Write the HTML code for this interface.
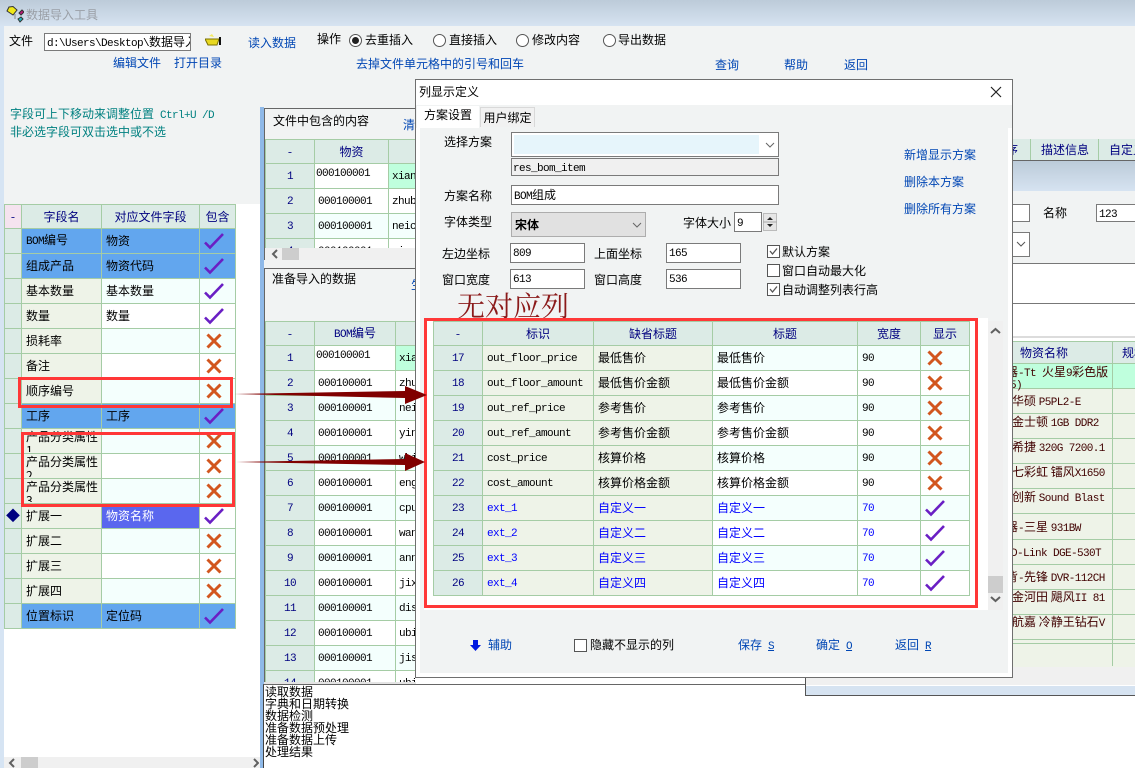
<!DOCTYPE html>
<html><head><meta charset="utf-8"><style>
html,body{margin:0;padding:0;width:1135px;height:768px;overflow:hidden;background:#fff}
body{position:relative;font:12px/14px "WenQuanYi Zen Hei","Noto Sans CJK SC",sans-serif;color:#000}
div,table,svg,span.t{position:absolute}
.t{position:absolute;white-space:nowrap}
.m{font-family:"Liberation Mono",monospace;font-size:11px;letter-spacing:-.6px}
.u{text-decoration:underline;margin-left:6px}
.l{color:#0046b4}
.inp{background:#fff;border:1px solid #7a7a7a;box-sizing:border-box;white-space:nowrap;overflow:hidden;padding-left:2px;line-height:16px}
table.g{border-collapse:collapse;table-layout:fixed;background:#fff}
table.g td{border:1px solid #a5cca5;box-sizing:border-box;height:25px;padding:0 0 0 4px;white-space:nowrap;overflow:hidden}
table.q td{padding-left:3px}
table.g tr.h td{height:24px;background:#dcebe6;color:#000080;text-align:center;padding:0}
table.g td.n{background:#dcebe6;color:#000080;text-align:center;padding:0}
table.g td.x{background:#f5e3ef;color:#000080;text-align:center;padding:0}
table.g td.e{background:#eef3e8}
table.g td.a{background:#f4fffd}
table.g td.s{background:#62a6ee}
table.g td.p{background:#5a67ee;color:#fff}
tr.b td{color:#00f}
table.g svg{position:static;display:block}
.w{display:block;height:23px;overflow:hidden;white-space:normal;word-break:break-all;padding-top:1px;box-sizing:border-box}
table.g td.e.v{vertical-align:top}
.chk,.rad{background:#fff;border:1px solid #555;box-sizing:border-box;width:13px;height:13px}
.rad{border-radius:50%}
</style></head><body>
<svg width="0" height="0" style="position:absolute"><defs>
<symbol id="c" viewBox="0 0 20 18"><path d="M1 10.5L6 15.5L19 2" fill="none" stroke="#6a1fc4" stroke-width="2.6"/></symbol>
<symbol id="k" viewBox="0 0 20 18"><path d="M3.5 2.5L16.5 15.5M16.5 2.5L3.5 15.5" fill="none" stroke="#d2561e" stroke-width="3"/></symbol>
</defs></svg>

<!-- window background -->
<div style="left:0;top:0;width:1135px;height:26px;background:linear-gradient(#bccbd9,#d6e3f1)"></div>
<div style="left:0;top:26px;width:4px;height:742px;background:#d6e4f3"></div>
<div style="left:4px;top:26px;width:1131px;height:178px;background:#f1f3f3"></div>
<div style="left:260px;top:204px;width:875px;height:100px;background:#f1f3f3"></div>
<svg style="left:4px;top:4px" width="20" height="20"><path d="M5 3L9 2.500L13 6L9 11L3 7Z" fill="#f0e818" stroke="#333"/><path d="M18 6L20 8L17 11L15 9Z" fill="#c01878" stroke="#333"/><path d="M14 15L17 13L19 15L16 18Z" fill="#20b8c0" stroke="#333"/><path d="M11 10V15" stroke="#888"/></svg>
<span class="t" style="left:26px;top:8px;color:#9a9fa6">数据导入工具</span>

<span class="t" style="left:9px;top:34px">文件</span>
<div class="inp" style="left:44px;top:33px;width:147px;height:18px;padding-left:2px"><span class="m">d:\Users\Desktop\</span>数据导入</div>
<svg style="left:205px;top:33px" width="17" height="13"><path d="M0 6H14L12 12H3Z" fill="#e8d820" stroke="#7a7000"/><path d="M15 4V12" stroke="#111" stroke-width="2"/><path d="M4 3L7 1L9 4" fill="#f4ea60"/></svg>
<span class="t l" style="left:248px;top:36px">读入数据</span>
<span class="t" style="left:317px;top:32px">操作</span>
<div class="rad" style="left:349px;top:34px"></div><div style="left:352px;top:37px;width:7px;height:7px;border-radius:50%;background:#222"></div>
<span class="t" style="left:365px;top:33px">去重插入</span>
<div class="rad" style="left:433px;top:34px"></div><span class="t" style="left:449px;top:33px">直接插入</span>
<div class="rad" style="left:516px;top:34px"></div><span class="t" style="left:532px;top:33px">修改内容</span>
<div class="rad" style="left:603px;top:34px"></div><span class="t" style="left:618px;top:33px">导出数据</span>
<span class="t l" style="left:113px;top:56px">编辑文件</span>
<span class="t l" style="left:174px;top:56px">打开目录</span>
<span class="t l" style="left:356px;top:57px">去掉文件单元格中的引号和回车</span>
<span class="t l" style="left:715px;top:58px">查询</span>
<span class="t l" style="left:784px;top:58px">帮助</span>
<span class="t l" style="left:844px;top:58px">返回</span>
<span class="t" style="left:10px;top:107px;color:#008080">字段可上下移动来调整位置<span class="m" style="margin-left:6px">Ctrl+U /D</span></span>
<span class="t" style="left:10px;top:125px;color:#008080">非必选字段可双击选中或不选</span>

<!-- left grid -->
<table class="g" style="left:4px;top:204px;width:231px">
<colgroup><col style="width:17px"><col style="width:80px"><col style="width:98px"><col style="width:36px"></colgroup>
<tr class="h"><td class="x" style="background:#f5e3ef">-</td><td>字段名</td><td>对应文件字段</td><td>包含</td></tr>
<tr><td class="n"></td><td class="s"><span class="m">BOM</span>编号</td><td class="s">物资</td><td class="s"><svg width="20" height="18"><use href="#c"/></svg></td></tr>
<tr><td class="n"></td><td class="s">组成产品</td><td class="s">物资代码</td><td class="s"><svg width="20" height="18"><use href="#c"/></svg></td></tr>
<tr><td class="n"></td><td class="e">基本数量</td><td class="a">基本数量</td><td class="a"><svg width="20" height="18"><use href="#c"/></svg></td></tr>
<tr><td class="n"></td><td class="e">数量</td><td>数量</td><td><svg width="20" height="18"><use href="#c"/></svg></td></tr>
<tr><td class="n"></td><td class="e">损耗率</td><td class="a"></td><td class="a"><svg width="20" height="18"><use href="#k"/></svg></td></tr>
<tr><td class="n"></td><td class="e">备注</td><td></td><td><svg width="20" height="18"><use href="#k"/></svg></td></tr>
<tr><td class="n"></td><td class="e">顺序编号</td><td class="a"></td><td class="a"><svg width="20" height="18"><use href="#k"/></svg></td></tr>
<tr><td class="n"></td><td class="s">工序</td><td class="s">工序</td><td class="s"><svg width="20" height="18"><use href="#c"/></svg></td></tr>
<tr><td class="n"></td><td class="e v"><span class="w">产品分类属性1</span></td><td class="a"></td><td class="a"><svg width="20" height="18"><use href="#k"/></svg></td></tr>
<tr><td class="n"></td><td class="e v"><span class="w">产品分类属性2</span></td><td></td><td><svg width="20" height="18"><use href="#k"/></svg></td></tr>
<tr><td class="n"></td><td class="e v"><span class="w">产品分类属性3</span></td><td class="a"></td><td class="a"><svg width="20" height="18"><use href="#k"/></svg></td></tr>
<tr><td class="n" style="color:#000080;font-size:14px">◆</td><td class="e">扩展一</td><td class="p">物资名称</td><td><svg width="20" height="18"><use href="#c"/></svg></td></tr>
<tr><td class="n"></td><td class="e">扩展二</td><td class="a"></td><td class="a"><svg width="20" height="18"><use href="#k"/></svg></td></tr>
<tr><td class="n"></td><td class="e">扩展三</td><td></td><td><svg width="20" height="18"><use href="#k"/></svg></td></tr>
<tr><td class="n"></td><td class="e">扩展四</td><td class="a"></td><td class="a"><svg width="20" height="18"><use href="#k"/></svg></td></tr>
<tr><td class="n"></td><td class="s">位置标识</td><td class="s">定位码</td><td class="s"><svg width="20" height="18"><use href="#c"/></svg></td></tr>
</table>
<div style="left:4px;top:757px;width:256px;height:11px;background:#f0f0f0"></div>
<div style="left:21px;top:757px;width:17px;height:11px;background:#cdcdcd"></div>
<svg style="left:7px;top:757px" width="252" height="11"><path d="M7 2L3 6L7 10M247 2L251 6L247 10" fill="none" stroke="#606060" stroke-width="2"/></svg>

<!-- blue strip -->
<div style="left:260px;top:107px;width:4px;height:661px;background:#8fb9e8"></div>

<!-- top panel -->
<div style="left:264px;top:108px;width:152px;height:152px;background:#f1f3f3;border-left:1px solid #666;border-top:1px solid #666;overflow:hidden;box-sizing:border-box">
<span class="t" style="left:8px;top:5px">文件中包含的内容</span>
<span class="t l" style="left:138px;top:9px">清</span>
<table class="g q" style="left:0;top:30px;width:200px">
<colgroup><col style="width:49px"><col style="width:74px"><col style="width:77px"></colgroup>
<tr class="h"><td class="x">-</td><td>物资</td><td>物</td></tr>
<tr><td class="n"><span class="m">1</span></td><td style="vertical-align:top;padding:1px 0 0 1px"><span class="m">000100001</span></td><td style="background:#bfffdd"><span class="m">xian</span></td></tr>
<tr><td class="n"><span class="m">2</span></td><td><span class="m">000100001</span></td><td><span class="m">zhub</span></td></tr>
<tr><td class="n"><span class="m">3</span></td><td class="a"><span class="m">000100001</span></td><td class="a"><span class="m">neic</span></td></tr>
<tr><td class="n"><span class="m">4</span></td><td><span class="m">000100001</span></td><td><span class="m">yin</span></td></tr>
</table>
<div style="left:0;top:139px;width:152px;height:12px;background:#f0f0f0"></div>
<div style="left:17px;top:139px;width:17px;height:12px;background:#cdcdcd"></div>
<svg style="left:5px;top:140px" width="10" height="11"><path d="M7 1L3 5L7 9" fill="none" stroke="#606060" stroke-width="2"/></svg>
</div>

<!-- second panel -->
<div style="left:264px;top:268px;width:152px;height:416px;background:#f1f3f3;border-left:1px solid #666;border-top:1px solid #666;overflow:hidden;box-sizing:border-box">
<span class="t" style="left:7px;top:3px">准备导入的数据</span>
<span class="t l" style="left:146px;top:9px">生</span>
<table class="g q" style="left:0;top:52px;width:200px">
<colgroup><col style="width:49px"><col style="width:81px"><col style="width:70px"></colgroup>
<tr class="h"><td class="x">-</td><td><span class="m">BOM</span>编号</td><td></td></tr>
<tr><td class="n"><span class="m">1</span></td><td style="vertical-align:top;padding:1px 0 0 1px"><span class="m">000100001</span></td><td style="background:#bfffdd"><span class="m">xian</span></td></tr>
<tr><td class="n"><span class="m">2</span></td><td><span class="m">000100001</span></td><td><span class="m">zhub</span></td></tr>
<tr><td class="n"><span class="m">3</span></td><td class="a"><span class="m">000100001</span></td><td class="a"><span class="m">neic</span></td></tr>
<tr><td class="n"><span class="m">4</span></td><td><span class="m">000100001</span></td><td><span class="m">yin</span></td></tr>
<tr><td class="n"><span class="m">5</span></td><td class="a"><span class="m">000100001</span></td><td class="a"><span class="m">whi</span></td></tr>
<tr><td class="n"><span class="m">6</span></td><td><span class="m">000100001</span></td><td><span class="m">eng</span></td></tr>
<tr><td class="n"><span class="m">7</span></td><td class="a"><span class="m">000100001</span></td><td class="a"><span class="m">cpu</span></td></tr>
<tr><td class="n"><span class="m">8</span></td><td><span class="m">000100001</span></td><td><span class="m">wan</span></td></tr>
<tr><td class="n"><span class="m">9</span></td><td class="a"><span class="m">000100001</span></td><td class="a"><span class="m">ann</span></td></tr>
<tr><td class="n"><span class="m">10</span></td><td><span class="m">000100001</span></td><td><span class="m">jix</span></td></tr>
<tr><td class="n"><span class="m">11</span></td><td class="a"><span class="m">000100001</span></td><td class="a"><span class="m">dis</span></td></tr>
<tr><td class="n"><span class="m">12</span></td><td><span class="m">000100001</span></td><td><span class="m">ubi</span></td></tr>
<tr><td class="n"><span class="m">13</span></td><td class="a"><span class="m">000100001</span></td><td class="a"><span class="m">jis</span></td></tr>
<tr><td class="n"><span class="m">14</span></td><td><span class="m">000100001</span></td><td><span class="m">ubi</span></td></tr>
</table>
</div>

<!-- log -->
<div style="left:264px;top:682px;width:152px;height:2px;background:#e4e4e4"></div>
<div style="left:263px;top:684px;width:542px;height:84px;background:#fff;border-left:1px solid #444;border-top:1px solid #666;box-sizing:border-box"></div>
<div style="left:265px;top:686px;line-height:12px;white-space:nowrap">读取数据<br>字典和日期转换<br>数据检测<br>准备数据预处理<br>准备数据上传<br>处理结果</div>

<!-- right window -->
<div style="left:1012px;top:139px;width:123px;height:22px;background:#dcebe6;border-bottom:1px solid #666;box-sizing:border-box;overflow:hidden;color:#000080">
<span class="t" style="left:-6px;top:4px">序</span><div style="left:18px;top:0;width:1px;height:21px;background:#a5cca5"></div>
<span class="t" style="left:29px;top:4px">描述信息</span><div style="left:86px;top:0;width:1px;height:21px;background:#a5cca5"></div>
<span class="t" style="left:97px;top:4px">自定义</span></div>
<div style="left:1012px;top:161px;width:123px;height:30px;background:linear-gradient(#bccbd9,#d6e3f1)"></div>
<div class="inp" style="left:1000px;top:204px;width:30px;height:18px"></div>
<span class="t" style="left:1043px;top:206px">名称</span>
<div class="inp" style="left:1096px;top:204px;width:50px;height:18px"><span class="m">123</span></div>
<div class="inp" style="left:1000px;top:232px;width:30px;height:25px"></div>
<svg style="left:1016px;top:240px" width="10" height="8"><path d="M1 2L5 6L9 2" fill="none" stroke="#555"/></svg>
<div style="left:1012px;top:263px;width:123px;height:41px;background:#fff;border-top:1px solid #777;border-bottom:1px solid #777;box-sizing:border-box"></div>
<div style="left:1012px;top:336px;width:123px;height:2px;background:#dcdcdc"></div>
<div style="left:805px;top:338px;width:330px;height:348px;background:#fff"></div>
<div style="left:1012px;top:341px;width:123px;height:326px;overflow:hidden;color:#400000;background:#eef3e8">
<div style="left:0;top:0;width:123px;height:23px;background:#dcebe6;color:#000080;border-top:1px solid #a5cca5;border-bottom:1px solid #a5cca5;box-sizing:border-box"><span class="t" style="left:8px;top:4px">物资名称</span><span class="t" style="left:110px;top:4px">规格</span></div>
<div style="left:0;top:23px;width:100px;height:25px;background:#bfffdd"></div>
<div style="left:100px;top:23px;width:23px;height:25px;background:#bfffdd"></div>
<div style="left:100px;top:0;width:1px;height:325px;background:#a5cca5"></div>
<div style="left:0;top:47px;width:123px;height:1px;background:#a5cca5"></div>
<div style="left:0;top:72px;width:123px;height:1px;background:#a5cca5"></div>
<div style="left:0;top:97px;width:123px;height:1px;background:#a5cca5"></div>
<div style="left:0;top:122px;width:123px;height:1px;background:#a5cca5"></div>
<div style="left:0;top:147px;width:123px;height:1px;background:#a5cca5"></div>
<div style="left:0;top:172px;width:123px;height:1px;background:#a5cca5"></div>
<div style="left:0;top:198px;width:123px;height:1px;background:#a5cca5"></div>
<div style="left:0;top:223px;width:123px;height:1px;background:#a5cca5"></div>
<div style="left:0;top:248px;width:123px;height:1px;background:#a5cca5"></div>
<div style="left:0;top:273px;width:123px;height:1px;background:#a5cca5"></div>
<div style="left:0;top:298px;width:123px;height:1px;background:#a5cca5"></div>
<div style="left:0;top:302px;width:123px;height:1px;background:#a5cca5"></div>
<span class="t" style="left:-6px;top:24px">器<span class="m">-Tt </span>火星<span class="m">9</span>彩色版</span>
<span class="t" style="left:-2px;top:36px"><span class="m">5)</span></span>
<span class="t" style="left:0;top:53px">华硕 <span class="m">P5PL2-E</span></span>
<span class="t" style="left:0;top:74px">金士顿 <span class="m">1GB DDR2</span></span>
<span class="t" style="left:0;top:99px">希捷 <span class="m">320G 7200.1</span></span>
<span class="t" style="left:0;top:124px">七彩虹 镭风<span class="m">X1650</span></span>
<span class="t" style="left:0;top:149px">创新 <span class="m">Sound Blast</span></span>
<span class="t" style="left:-6px;top:179px">器<span class="m">-</span>三星 <span class="m">931BW</span></span>
<span class="t" style="left:-1px;top:204px"><span class="m">D-Link DGE-530T</span></span>
<span class="t" style="left:-6px;top:229px">背<span class="m">-</span>先锋 <span class="m">DVR-112CH</span></span>
<span class="t" style="left:0;top:249px">金河田 飓风<span class="m">II 81</span></span>
<span class="t" style="left:0;top:274px">航嘉 冷静王钻石<span class="m">V</span></span>
</div>
<div style="left:805px;top:667px;width:330px;height:18px;background:#f0f0f0"></div>
<div style="left:805px;top:685px;width:330px;height:11px;background:#d6e3f1;border-top:1px solid #fff;border-bottom:1px solid #555;box-sizing:border-box"></div>
<div style="left:805px;top:677px;width:1px;height:19px;background:#555"></div>

<!-- dialog -->
<div style="left:415px;top:79px;width:598px;height:599px;background:#fff;border:1px solid #6f6f6f;box-sizing:border-box"></div>
<div style="left:420px;top:127px;width:588px;height:546px;background:#f1f3f3"></div>
<div style="left:416px;top:105px;width:596px;height:23px;background:#f1f3f3"></div>
<span class="t" style="left:419px;top:85px">列显示定义</span>
<svg style="left:990px;top:86px" width="12" height="12"><path d="M1 1L11 11M11 1L1 11" stroke="#222" stroke-width="1.2"/></svg>
<div style="left:417px;top:106px;width:62px;height:22px;background:#fff;text-align:center;line-height:18px">方案设置</div>
<div style="left:480px;top:107px;width:55px;height:20px;background:#f1f1f1;border:1px solid #d9d9d9;border-bottom:0;box-sizing:border-box;text-align:center;line-height:20px">用户绑定</div>

<span class="t" style="left:444px;top:135px">选择方案</span>
<div class="inp" style="left:511px;top:132px;width:268px;height:25px"></div>
<div style="left:514px;top:135px;width:245px;height:19px;background:#e6f5fb"></div>
<svg style="left:765px;top:141px" width="10" height="8"><path d="M1 2L5 6L9 2" fill="none" stroke="#666"/></svg>
<div class="inp" style="left:511px;top:158px;width:268px;height:18px;background:#f0f0f0;padding-left:1px"><span class="m">res_bom_item</span></div>
<span class="t" style="left:444px;top:189px">方案名称</span>
<div class="inp" style="left:511px;top:185px;width:268px;height:20px;line-height:18px"><span class="m">BOM</span>组成</div>
<span class="t" style="left:444px;top:215px">字体类型</span>
<div style="left:511px;top:212px;width:135px;height:25px;background:#e1e1e1;border:1px solid #adadad;box-sizing:border-box"><span class="t" style="left:3px;top:5px;font-weight:bold">宋体</span></div>
<svg style="left:632px;top:221px" width="10" height="8"><path d="M1 2L5 6L9 2" fill="none" stroke="#666"/></svg>
<span class="t" style="left:683px;top:216px">字体大小</span>
<div class="inp" style="left:734px;top:212px;width:28px;height:20px;line-height:18px"><span class="m">9</span></div>
<div style="left:763px;top:213px;width:14px;height:18px;background:#e6e6e6;border:1px solid #bbb;box-sizing:border-box"></div>
<svg style="left:763px;top:213px" width="14" height="18"><path d="M4 7L7 4L10 7ZM4 11L7 14L10 11Z" fill="#222"/><path d="M0 9H14" stroke="#aaa"/></svg>
<span class="t" style="left:442px;top:247px">左边坐标</span>
<div class="inp" style="left:510px;top:243px;width:75px;height:20px;line-height:16px"><span class="m">809</span></div>
<span class="t" style="left:594px;top:247px">上面坐标</span>
<div class="inp" style="left:666px;top:243px;width:75px;height:20px;line-height:16px"><span class="m">165</span></div>
<span class="t" style="left:442px;top:273px">窗口宽度</span>
<div class="inp" style="left:510px;top:269px;width:75px;height:20px;line-height:16px"><span class="m">613</span></div>
<span class="t" style="left:594px;top:273px">窗口高度</span>
<div class="inp" style="left:666px;top:269px;width:75px;height:20px;line-height:16px"><span class="m">536</span></div>
<div class="chk" style="left:767px;top:245px"></div><svg style="left:767px;top:245px" width="13" height="13"><path d="M3 6L5.500 9L10 3.500" fill="none" stroke="#555" stroke-width="1.3"/></svg>
<span class="t" style="left:782px;top:245px">默认方案</span>
<div class="chk" style="left:767px;top:264px"></div><span class="t" style="left:782px;top:264px">窗口自动最大化</span>
<div class="chk" style="left:767px;top:283px"></div><svg style="left:767px;top:283px" width="13" height="13"><path d="M3 6L5.500 9L10 3.500" fill="none" stroke="#555" stroke-width="1.3"/></svg>
<span class="t" style="left:782px;top:283px">自动调整列表行高</span>
<span class="t l" style="left:904px;top:148px">新增显示方案</span>
<span class="t l" style="left:904px;top:175px">删除本方案</span>
<span class="t l" style="left:904px;top:202px">删除所有方案</span>

<!-- dialog grid -->
<div style="left:424px;top:318px;width:564px;height:292px;background:#fff"></div>
<table class="g" style="left:433px;top:321px;width:536px">
<colgroup><col style="width:49px"><col style="width:111px"><col style="width:119px"><col style="width:145px"><col style="width:63px"><col style="width:49px"></colgroup>
<tr class="h"><td class="x">-</td><td>标识</td><td>缺省标题</td><td>标题</td><td>宽度</td><td>显示</td></tr>
<tr><td class="n"><span class="m">17</span></td><td class="e"><span class="m">out_floor_price</span></td><td class="e">最低售价</td><td class="a">最低售价</td><td class="a"><span class="m">90</span></td><td class="a"><svg width="20" height="18"><use href="#k"/></svg></td></tr>
<tr><td class="n"><span class="m">18</span></td><td class="e"><span class="m">out_floor_amount</span></td><td class="e">最低售价金额</td><td>最低售价金额</td><td><span class="m">90</span></td><td><svg width="20" height="18"><use href="#k"/></svg></td></tr>
<tr><td class="n"><span class="m">19</span></td><td class="e"><span class="m">out_ref_price</span></td><td class="e">参考售价</td><td class="a">参考售价</td><td class="a"><span class="m">90</span></td><td class="a"><svg width="20" height="18"><use href="#k"/></svg></td></tr>
<tr><td class="n"><span class="m">20</span></td><td class="e"><span class="m">out_ref_amount</span></td><td class="e">参考售价金额</td><td>参考售价金额</td><td><span class="m">90</span></td><td><svg width="20" height="18"><use href="#k"/></svg></td></tr>
<tr><td class="n"><span class="m">21</span></td><td class="e"><span class="m">cost_price</span></td><td class="e">核算价格</td><td class="a">核算价格</td><td class="a"><span class="m">90</span></td><td class="a"><svg width="20" height="18"><use href="#k"/></svg></td></tr>
<tr><td class="n"><span class="m">22</span></td><td class="e"><span class="m">cost_amount</span></td><td class="e">核算价格金额</td><td>核算价格金额</td><td><span class="m">90</span></td><td><svg width="20" height="18"><use href="#k"/></svg></td></tr>
<tr class="b"><td class="n"><span class="m">23</span></td><td class="e"><span class="m">ext_1</span></td><td class="e">自定义一</td><td class="a">自定义一</td><td class="a"><span class="m">70</span></td><td class="a"><svg width="20" height="18"><use href="#c"/></svg></td></tr>
<tr class="b"><td class="n"><span class="m">24</span></td><td class="e"><span class="m">ext_2</span></td><td class="e">自定义二</td><td>自定义二</td><td><span class="m">70</span></td><td><svg width="20" height="18"><use href="#c"/></svg></td></tr>
<tr class="b"><td class="n"><span class="m">25</span></td><td class="e"><span class="m">ext_3</span></td><td class="e">自定义三</td><td class="a">自定义三</td><td class="a"><span class="m">70</span></td><td class="a"><svg width="20" height="18"><use href="#c"/></svg></td></tr>
<tr class="b"><td class="n"><span class="m">26</span></td><td class="e"><span class="m">ext_4</span></td><td class="e">自定义四</td><td>自定义四</td><td><span class="m">70</span></td><td><svg width="20" height="18"><use href="#c"/></svg></td></tr>
</table>
<div style="left:988px;top:321px;width:15px;height:289px;background:#f0f0f0"></div>
<div style="left:988px;top:576px;width:15px;height:17px;background:#cdcdcd"></div>
<svg style="left:988px;top:321px" width="15" height="289"><path d="M3 12L7.500 8L12 12M3 276L7.500 280L12 276" fill="none" stroke="#606060" stroke-width="2"/></svg>
<span class="t" style="left:457px;top:288px;font:28px/34px 'Noto Serif CJK SC',serif;color:#8b1a1a">无对应列</span>

<!-- dialog bottom -->
<svg style="left:470px;top:639px" width="12" height="14"><path d="M3 1H8V6H11L5.500 12L0 6H3Z" fill="#0018e0"/></svg>
<span class="t l" style="left:488px;top:638px">辅助</span>
<div class="chk" style="left:574px;top:639px"></div>
<span class="t" style="left:590px;top:638px">隐藏不显示的列</span>
<span class="t l" style="left:738px;top:638px">保存<span class="m u">S</span></span>
<span class="t l" style="left:816px;top:638px">确定<span class="m u">O</span></span>
<span class="t l" style="left:895px;top:638px">返回<span class="m u">R</span></span>

<!-- red boxes & arrows -->
<div style="left:18px;top:377px;width:215px;height:31px;border:3px solid #ff3737;box-sizing:border-box"></div>
<div style="left:21px;top:432px;width:214px;height:75px;border:3px solid #ff3737;box-sizing:border-box"></div>
<div style="left:424px;top:318px;width:554px;height:290px;border:3px solid #ff3737;box-sizing:border-box"></div>
<svg style="left:0;top:0" width="1135" height="768"><path d="M234 394L405 391L405 386L427 395L405 404L405 398Z" fill="#800000"/><path d="M236 462L405 459L405 453L425 462L405 471L405 465Z" fill="#800000"/></svg>
</body></html>
